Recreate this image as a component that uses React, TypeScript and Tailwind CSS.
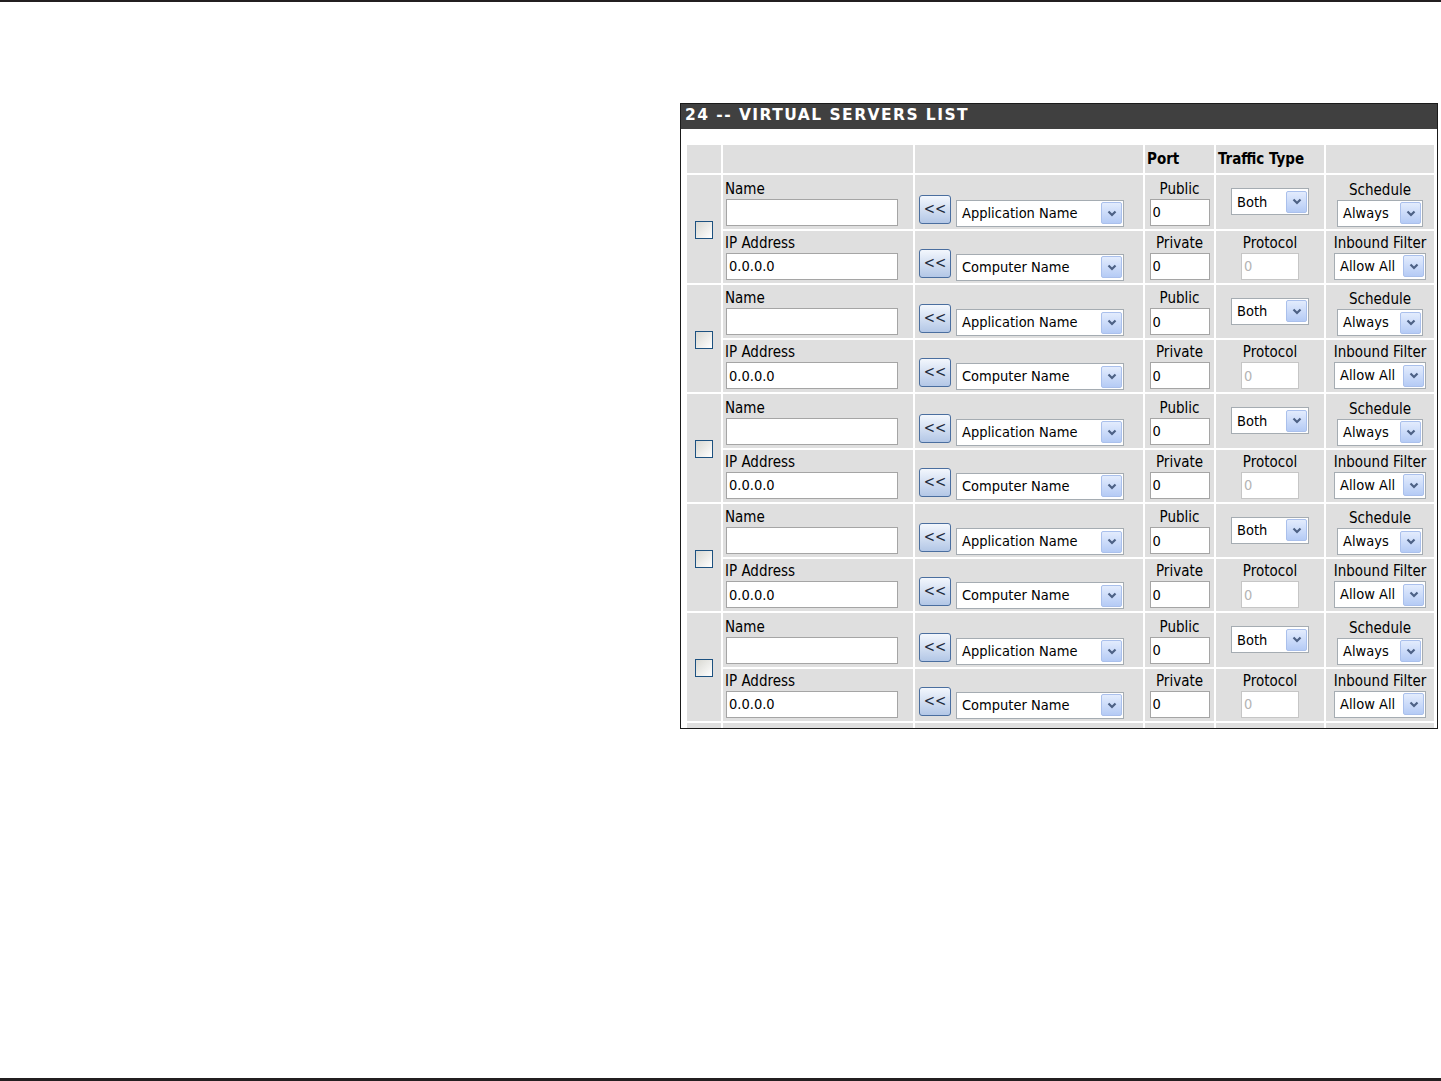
import React from "react";

const font = "font-['DejaVu_Sans_Condensed','Liberation_Sans',sans-serif]";

function Chevron() {
  return (
    <svg width="10" height="7" viewBox="0 0 10 7">
      <path d="M1.5 1.5L5 5l3.5-3.5" fill="none" stroke="#4d6185" strokeWidth="2.2" />
    </svg>
  );
}

function Dropdown({ text, className }: { text: string; className: string }) {
  return (
    <div className={`flex h-[27px] items-center border border-[#a5acb2] bg-white pl-[5px] ${className}`}>
      <span className="flex-1 whitespace-nowrap text-[14.5px] leading-none text-black">{text}</span>
      <span className="mr-[1px] flex h-[22px] w-[21px] items-center justify-center rounded-[2px] border border-[#aac0ec] bg-linear-to-b from-[#e3ecfd] to-[#b5cbf5]">
        <Chevron />
      </span>
    </div>
  );
}

function Field({ value, className, disabled }: { value: string; className: string; disabled?: boolean }) {
  return (
    <input
      readOnly
      value={value}
      className={`h-[27px] border bg-white px-[2px] text-[14.5px] outline-none ${
        disabled ? "border-[#c6c6c6] text-[#b4b4b4]" : "border-[#a5a5a5] text-black"
      } ${className}`}
    />
  );
}

function PickButton() {
  return (
    <div className="mb-[3px] flex h-[29px] w-[32px] shrink-0 items-center justify-center rounded-[3px] border border-[#4a6e9f] bg-linear-to-b from-[#f3f7fd] to-[#b3c7e6] text-[15px] leading-none text-[#1e2a3c]">
      &lt;&lt;
    </div>
  );
}

function Checkbox() {
  return <div className="mt-[3px] h-[18px] w-[18px] border border-[#1c5180] bg-linear-to-br from-[#d8d8d2] to-white" />;
}

const cell = "bg-[#dfdfdf]";

function Entry() {
  return (
    <>
      <div className={`${cell} row-span-2 flex items-center justify-center`}>
        <Checkbox />
      </div>

      <div className={`${cell} flex flex-col justify-end pb-[3px] pl-[2px]`}>
        <span className="leading-[16px]">Name</span>
        <Field value="" className="mt-[2px] ml-[1px] w-[172px]" />
      </div>
      <div className={`${cell} flex items-end pb-[2px] pl-[4px]`}>
        <PickButton />
        <Dropdown text="Application Name" className="ml-[5px] w-[168px]" />
      </div>
      <div className={`${cell} flex flex-col items-center justify-end pb-[3px]`}>
        <span className="leading-[16px]">Public</span>
        <Field value="0" className="mt-[2px] w-[60px]" />
      </div>
      <div className={`${cell} flex items-center justify-center`}>
        <Dropdown text="Both" className="w-[78px]" />
      </div>
      <div className={`${cell} flex flex-col items-center justify-end pb-[2px]`}>
        <span className="leading-[16px]">Schedule</span>
        <Dropdown text="Always" className="mt-[2px] w-[86px]" />
      </div>

      <div className={`${cell} flex flex-col justify-end pb-[3px] pl-[2px]`}>
        <span className="leading-[16px]">IP Address</span>
        <Field value="0.0.0.0" className="mt-[2px] ml-[1px] w-[172px]" />
      </div>
      <div className={`${cell} flex items-end pb-[2px] pl-[4px]`}>
        <PickButton />
        <Dropdown text="Computer Name" className="ml-[5px] w-[168px]" />
      </div>
      <div className={`${cell} flex flex-col items-center justify-end pb-[3px]`}>
        <span className="leading-[16px]">Private</span>
        <Field value="0" className="mt-[2px] w-[60px]" />
      </div>
      <div className={`${cell} flex flex-col items-center justify-end pb-[3px]`}>
        <span className="leading-[16px]">Protocol</span>
        <Field value="0" disabled className="mt-[2px] w-[58px]" />
      </div>
      <div className={`${cell} flex flex-col items-center justify-end pb-[3px]`}>
        <span className="leading-[16px]">Inbound Filter</span>
        <Dropdown text="Allow All" className="mt-[2px] w-[92px]" />
      </div>
    </>
  );
}

// the list keeps going below the panel edge; only the top of the next entry shows
function CutEntry() {
  return (
    <>
      <div className={`${cell} row-span-2`} />
      <div className={cell} />
      <div className={cell} />
      <div className={cell} />
      <div className={cell} />
      <div className={cell} />
    </>
  );
}

export default function App() {
  return (
    <div className={`flex h-[1081px] w-full flex-col bg-white text-[15px] text-black ${font}`}>
      <div className="h-[2px] w-full shrink-0 bg-[#231f20]" />

      <div className="flex-1 pt-[101px] pl-[680px]">
        <div className="h-[626px] w-[758px] overflow-hidden border border-[#1a1a1a]">
          <div className="flex h-[25px] items-center bg-[#404040] pb-[2px] pl-[4px] font-['DejaVu_Sans',sans-serif] text-[15.5px] font-bold tracking-[1.45px] text-white">
            24 -- VIRTUAL SERVERS LIST
          </div>
          <div className="pt-[16px] pl-[6px]">
            <div className="grid grid-cols-[34px_190px_228px_69px_108px_108px] grid-rows-[28px] auto-rows-[53.5px_52px] gap-[2px]">
              <div className={cell} />
              <div className={cell} />
              <div className={cell} />
              <div className={`${cell} flex items-center pl-[2px] font-bold`}>Port</div>
              <div className={`${cell} flex items-center pl-[2px] font-bold`}>Traffic Type</div>
              <div className={cell} />
              <Entry />
              <Entry />
              <Entry />
              <Entry />
              <Entry />
              <CutEntry />
            </div>
          </div>
        </div>
      </div>

      <div className="h-[3px] w-full shrink-0 bg-[#231f20]" />
    </div>
  );
}
